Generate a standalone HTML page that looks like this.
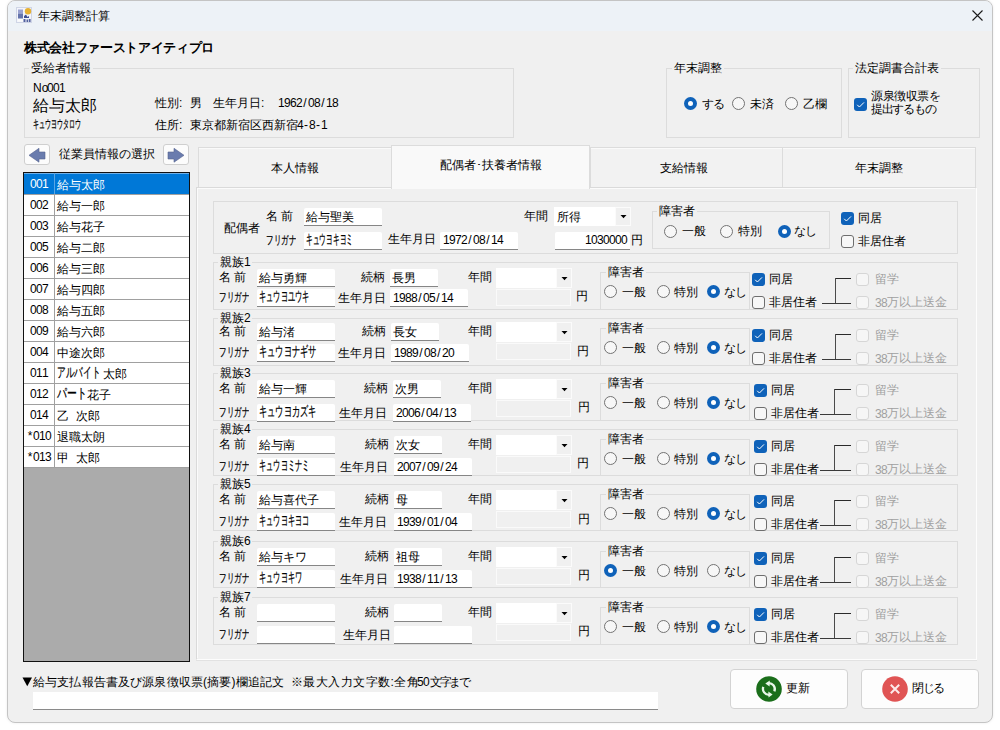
<!DOCTYPE html><html><head><meta charset="utf-8"><style>
html,body{margin:0;padding:0;width:1000px;height:730px;overflow:hidden;background:#fff;}
body{position:relative;font-family:"Liberation Sans",sans-serif;}
.t{position:absolute;white-space:nowrap;line-height:14px;font-size:12px;}
.m i{font-style:normal;display:inline-block;width:6px;text-align:center;}
.h{transform-origin:0 0;-webkit-text-stroke:0.25px currentColor;}
.b{position:absolute;box-sizing:content-box;}
</style></head><body>

<div class="b" style="left:7px;top:0px;width:984px;height:721px;border:1px solid #c4c4c4;border-radius:8px;background:#f0f0f0;box-shadow:0 0 3px rgba(0,0,0,0.08);overflow:hidden">
<div class="b" style="left:0;top:0;width:984px;height:30px;background:#edf2f7;"></div>
</div>
<svg class="b" style="left:16px;top:7px" width="16" height="16">
<rect x="0.5" y="0.5" width="15" height="15" fill="#f3f5fb" stroke="#cfd5e6"/>
<rect x="2" y="2.5" width="5" height="4" fill="#9aa2d0"/>
<rect x="2" y="6.5" width="5" height="5" fill="#6474ac"/>
<rect x="2" y="12" width="5" height="2.5" fill="#fafafa"/>
<circle cx="12" cy="4.3" r="3.2" fill="#e5b032"/>
<path d="M8 9 L10 7.5 L11.5 10 L13 9 L13 11 L8 11 Z" fill="#3e4f93"/>
<path d="M7.5 12 h2 v3 h-2 Z M10.5 12.5 h1.6 v2.5 h-1.6 Z M12.8 12 h1.8 v3 h-1.8 Z" fill="#52619e"/>
</svg>
<div class="t" style="left:38px;top:9px;font-size:12px;color:#000;">年末調整計算</div>
<svg class="b" style="left:971px;top:9px" width="13" height="13"><path d="M1.5 1.5 L11.5 11.5 M11.5 1.5 L1.5 11.5" stroke="#1a1a1a" stroke-width="1.1"/></svg>
<div class="t" style="left:24px;top:41px;font-size:13px;color:#000;font-weight:bold;letter-spacing:-0.33px">株式会社ファーストアイティプロ</div>
<div class="b" style="left:24px;top:68px;width:488px;height:68px;border:1px solid #dcdcdc;"></div>
<div class="t" style="left:31px;top:61px;font-size:12px;color:#000;background:#f0f0f0;padding:0 2px 0 2px;margin-left:-2px;">受給者情報</div>
<div class="t" style="left:33px;top:81px;font-size:12px;color:#000;">No</div>
<div class="t m" style="left:47px;top:81px;color:#000;"><i>0</i><i>0</i><i>1</i></div>
<div class="t" style="left:33px;top:96px;font-size:16px;color:#000;line-height:20px">給与太郎</div>
<div class="t h" style="left:33px;top:117px;font-size:12px;color:#000;transform:scaleX(0.5000);">キュウヨウタロウ</div>
<div class="t" style="left:155px;top:96px;font-size:12px;color:#000;">性別:</div>
<div class="t" style="left:190px;top:96px;font-size:12px;color:#000;">男</div>
<div class="t" style="left:213px;top:96px;font-size:12px;color:#000;">生年月日:</div>
<div class="t m" style="left:278px;top:96px;color:#000;"><i>1</i><i>9</i><i>6</i><i>2</i><i>/</i><i>0</i><i>8</i><i>/</i><i>1</i><i>8</i></div>
<div class="t" style="left:155px;top:118px;font-size:12px;color:#000;">住所:</div>
<div class="t" style="left:190px;top:118px;font-size:12px;color:#000;">東京都新宿区西新宿</div>
<div class="t m" style="left:297px;top:118px;color:#000;"><i>4</i><i>-</i><i>8</i><i>-</i><i>1</i></div>
<div class="b" style="left:666px;top:68px;width:174px;height:68px;border:1px solid #dcdcdc;"></div>
<div class="t" style="left:674px;top:61px;font-size:12px;color:#000;background:#f0f0f0;padding:0 2px 0 2px;margin-left:-2px;">年末調整</div>
<div class="b" style="left:684px;top:97px;width:13px;height:13px;border-radius:50%;background:#0f62b9;"></div>
<div class="b" style="left:688px;top:101px;width:5px;height:5px;border-radius:50%;background:#fff;"></div>
<div class="t" style="left:702px;top:97px;font-size:12px;color:#000;letter-spacing:-1.5px">する</div>
<div class="b" style="left:732px;top:97px;width:11px;height:11px;border-radius:50%;border:1px solid #737373;background:#f7f7f7;"></div>
<div class="t" style="left:750px;top:97px;font-size:12px;color:#000;">未済</div>
<div class="b" style="left:785px;top:97px;width:11px;height:11px;border-radius:50%;border:1px solid #737373;background:#f7f7f7;"></div>
<div class="t" style="left:803px;top:97px;font-size:12px;color:#000;">乙欄</div>
<div class="b" style="left:848px;top:68px;width:130px;height:68px;border:1px solid #dcdcdc;"></div>
<div class="t" style="left:855px;top:61px;font-size:12px;color:#000;background:#f0f0f0;padding:0 2px 0 2px;margin-left:-2px;">法定調書合計表</div>
<div class="b" style="left:854px;top:98px;width:13px;height:13px;border-radius:3px;background:#0f62b9;"></div>
<svg class="b" style="left:854px;top:98px" width="13" height="13"><path d="M3.2 6.8 L5.4 9 L10 4.4" stroke="#fff" stroke-width="1" fill="none"/></svg>
<div class="t" style="left:871px;top:90px;font-size:12px;color:#000;line-height:13px;letter-spacing:-0.4px">源泉徴収票を</div>
<div class="t" style="left:871px;top:103px;font-size:12px;color:#000;line-height:13px;letter-spacing:-1.3px">提出するもの</div>
<div class="b" style="left:24px;top:144px;width:24px;height:19px;background:#fcfcfc;border:1px solid #cfcfcf;border-radius:3px;"></div>
<svg class="b" style="left:24px;top:144px" width="26" height="21"><path d="M5 11.3 L15 4.3 L15 8 L21 8 L21 15 L15 15 L15 18.2 Z" fill="#6a7cae" stroke="#56638f" stroke-width="0.6"/></svg>
<div class="b" style="left:163px;top:144px;width:24px;height:19px;background:#fcfcfc;border:1px solid #cfcfcf;border-radius:3px;"></div>
<svg class="b" style="left:163px;top:144px" width="26" height="21"><path d="M21 11.3 L11 4.3 L11 8 L5 8 L5 15 L11 15 L11 18.2 Z" fill="#6a7cae" stroke="#56638f" stroke-width="0.6"/></svg>
<div class="t" style="left:59px;top:147px;font-size:12px;color:#000;">従業員情報の選択</div>
<div class="b" style="left:23px;top:172px;width:165px;height:488px;border:1px solid #111;background:#ababab;"></div>
<div class="b" style="left:24px;top:174px;width:165px;height:20px;background:#0078d7;border-bottom:1px solid #a0a0a0;"></div>
<div class="b" style="left:24px;top:173px;width:165px;height:1px;background:#6fb0e8"></div>
<div class="b" style="left:54px;top:173px;width:1px;height:21px;background:#5aa6e4;"></div>
<div class="t m" style="left:30px;top:177px;color:#fff;"><i>0</i><i>0</i><i>1</i></div>
<div class="t" style="left:57px;top:178px;font-size:12px;color:#fff;">給与太郎</div>
<div class="b" style="left:24px;top:195px;width:165px;height:20px;background:#fff;border-bottom:1px solid #a0a0a0;"></div>
<div class="b" style="left:54px;top:195px;width:1px;height:21px;background:#a0a0a0;"></div>
<div class="t m" style="left:30px;top:198px;color:#000;"><i>0</i><i>0</i><i>2</i></div>
<div class="t" style="left:57px;top:199px;font-size:12px;color:#000;">給与一郎</div>
<div class="b" style="left:24px;top:216px;width:165px;height:20px;background:#fff;border-bottom:1px solid #a0a0a0;"></div>
<div class="b" style="left:54px;top:216px;width:1px;height:21px;background:#a0a0a0;"></div>
<div class="t m" style="left:30px;top:219px;color:#000;"><i>0</i><i>0</i><i>3</i></div>
<div class="t" style="left:57px;top:220px;font-size:12px;color:#000;">給与花子</div>
<div class="b" style="left:24px;top:237px;width:165px;height:20px;background:#fff;border-bottom:1px solid #a0a0a0;"></div>
<div class="b" style="left:54px;top:237px;width:1px;height:21px;background:#a0a0a0;"></div>
<div class="t m" style="left:30px;top:240px;color:#000;"><i>0</i><i>0</i><i>5</i></div>
<div class="t" style="left:57px;top:241px;font-size:12px;color:#000;">給与二郎</div>
<div class="b" style="left:24px;top:258px;width:165px;height:20px;background:#fff;border-bottom:1px solid #a0a0a0;"></div>
<div class="b" style="left:54px;top:258px;width:1px;height:21px;background:#a0a0a0;"></div>
<div class="t m" style="left:30px;top:261px;color:#000;"><i>0</i><i>0</i><i>6</i></div>
<div class="t" style="left:57px;top:262px;font-size:12px;color:#000;">給与三郎</div>
<div class="b" style="left:24px;top:279px;width:165px;height:20px;background:#fff;border-bottom:1px solid #a0a0a0;"></div>
<div class="b" style="left:54px;top:279px;width:1px;height:21px;background:#a0a0a0;"></div>
<div class="t m" style="left:30px;top:282px;color:#000;"><i>0</i><i>0</i><i>7</i></div>
<div class="t" style="left:57px;top:283px;font-size:12px;color:#000;">給与四郎</div>
<div class="b" style="left:24px;top:300px;width:165px;height:20px;background:#fff;border-bottom:1px solid #a0a0a0;"></div>
<div class="b" style="left:54px;top:300px;width:1px;height:21px;background:#a0a0a0;"></div>
<div class="t m" style="left:30px;top:303px;color:#000;"><i>0</i><i>0</i><i>8</i></div>
<div class="t" style="left:57px;top:304px;font-size:12px;color:#000;">給与五郎</div>
<div class="b" style="left:24px;top:321px;width:165px;height:20px;background:#fff;border-bottom:1px solid #a0a0a0;"></div>
<div class="b" style="left:54px;top:321px;width:1px;height:21px;background:#a0a0a0;"></div>
<div class="t m" style="left:30px;top:324px;color:#000;"><i>0</i><i>0</i><i>9</i></div>
<div class="t" style="left:57px;top:325px;font-size:12px;color:#000;">給与六郎</div>
<div class="b" style="left:24px;top:342px;width:165px;height:20px;background:#fff;border-bottom:1px solid #a0a0a0;"></div>
<div class="b" style="left:54px;top:342px;width:1px;height:21px;background:#a0a0a0;"></div>
<div class="t m" style="left:30px;top:345px;color:#000;"><i>0</i><i>0</i><i>4</i></div>
<div class="t" style="left:57px;top:346px;font-size:12px;color:#000;">中途次郎</div>
<div class="b" style="left:24px;top:363px;width:165px;height:20px;background:#fff;border-bottom:1px solid #a0a0a0;"></div>
<div class="b" style="left:54px;top:363px;width:1px;height:21px;background:#a0a0a0;"></div>
<div class="t m" style="left:30px;top:366px;color:#000;"><i>0</i><i>1</i><i>1</i></div>
<div class="t h" style="left:57px;top:365px;font-size:14px;color:#000;transform:scaleX(0.6171);">アルバイト</div>
<div class="t" style="left:103px;top:367px;font-size:12px;color:#000;">太郎</div>
<div class="b" style="left:24px;top:384px;width:165px;height:20px;background:#fff;border-bottom:1px solid #a0a0a0;"></div>
<div class="b" style="left:54px;top:384px;width:1px;height:21px;background:#a0a0a0;"></div>
<div class="t m" style="left:30px;top:387px;color:#000;"><i>0</i><i>1</i><i>2</i></div>
<div class="t h" style="left:57px;top:386px;font-size:14px;color:#000;transform:scaleX(0.7048);">パート</div>
<div class="t" style="left:87px;top:388px;font-size:12px;color:#000;">花子</div>
<div class="b" style="left:24px;top:405px;width:165px;height:20px;background:#fff;border-bottom:1px solid #a0a0a0;"></div>
<div class="b" style="left:54px;top:405px;width:1px;height:21px;background:#a0a0a0;"></div>
<div class="t m" style="left:30px;top:408px;color:#000;"><i>0</i><i>1</i><i>4</i></div>
<div class="t" style="left:57px;top:409px;font-size:12px;color:#000;">乙</div>
<div class="t" style="left:76px;top:409px;font-size:12px;color:#000;">次郎</div>
<div class="b" style="left:24px;top:426px;width:165px;height:20px;background:#fff;border-bottom:1px solid #a0a0a0;"></div>
<div class="b" style="left:54px;top:426px;width:1px;height:21px;background:#a0a0a0;"></div>
<div class="t m" style="left:27px;top:429px;color:#000;"><i>*</i><i>0</i><i>1</i><i>0</i></div>
<div class="t" style="left:57px;top:430px;font-size:12px;color:#000;">退職太朗</div>
<div class="b" style="left:24px;top:447px;width:165px;height:20px;background:#fff;border-bottom:1px solid #a0a0a0;"></div>
<div class="b" style="left:54px;top:447px;width:1px;height:21px;background:#a0a0a0;"></div>
<div class="t m" style="left:27px;top:450px;color:#000;"><i>*</i><i>0</i><i>1</i><i>3</i></div>
<div class="t" style="left:57px;top:451px;font-size:12px;color:#000;">甲</div>
<div class="t" style="left:76px;top:451px;font-size:12px;color:#000;">太郎</div>
<div class="b" style="left:196px;top:187px;width:779px;height:471px;background:#f0f0f0;border:1px solid #dadada;border-right-color:#fdfdfd;border-bottom-color:#fdfdfd;"></div>
<div class="b" style="left:196px;top:660px;width:781px;height:1px;background:#e2e2e2"></div>
<div class="b" style="left:197px;top:188px;width:778px;height:1px;background:#fbfbfb"></div>
<div class="b" style="left:197px;top:188px;width:1px;height:470px;background:#fbfbfb"></div>
<div class="b" style="left:198px;top:147px;width:192px;height:39px;background:#f2f2f2;border:1px solid #dcdcdc;border-bottom:none;"></div>
<div class="b" style="left:199px;top:148px;width:192px;height:1px;background:#fafafa"></div>
<div class="t" style="left:198px;top:148px;width:193px;text-align:center;line-height:40px">本人情報</div>
<div class="b" style="left:590px;top:147px;width:191px;height:39px;background:#f2f2f2;border:1px solid #dcdcdc;border-bottom:none;"></div>
<div class="b" style="left:591px;top:148px;width:191px;height:1px;background:#fafafa"></div>
<div class="t" style="left:588px;top:148px;width:192px;text-align:center;line-height:40px">支給情報</div>
<div class="b" style="left:782px;top:147px;width:192px;height:39px;background:#f2f2f2;border:1px solid #dcdcdc;border-bottom:none;"></div>
<div class="b" style="left:783px;top:148px;width:192px;height:1px;background:#fafafa"></div>
<div class="t" style="left:782px;top:148px;width:193px;text-align:center;line-height:40px">年末調整</div>
<div class="b" style="left:391px;top:145px;width:197px;height:43px;background:#f9f9f9;border:1px solid #dcdcdc;border-bottom:none;"></div>
<div class="t" style="left:391px;top:145px;width:200px;text-align:center;line-height:40px">配偶者･扶養者情報</div>
<div class="b" style="left:213px;top:201px;width:743px;height:51px;border:1px solid #dcdcdc;"></div>
<div class="t" style="left:224px;top:221px;font-size:12px;color:#000;">配偶者</div>
<div class="t" style="left:266px;top:209px;font-size:12px;color:#000;">名&nbsp;前</div>
<div class="t h" style="left:266px;top:233px;font-size:12px;color:#000;transform:scaleX(0.6250);">フリガナ</div>
<div class="b" style="left:304px;top:208px;width:78px;height:17px;background:#fff;border-bottom:1px solid #868686;border-radius:2px 2px 0 0;"></div>
<div class="t" style="left:306px;top:210px;font-size:12px;color:#000;">給与聖美</div>
<div class="b" style="left:304px;top:232px;width:78px;height:17px;background:#fff;border-bottom:1px solid #868686;border-radius:2px 2px 0 0;"></div>
<div class="t h" style="left:306px;top:232px;font-size:14px;color:#000;transform:scaleX(0.4786);">キュウヨキヨミ</div>
<div class="t" style="left:388px;top:232px;font-size:12px;color:#000;">生年月日</div>
<div class="b" style="left:440px;top:232px;width:78px;height:17px;background:#fff;border-bottom:1px solid #868686;border-radius:2px 2px 0 0;"></div>
<div class="t m" style="left:443px;top:233px;color:#000;"><i>1</i><i>9</i><i>7</i><i>2</i><i>/</i><i>0</i><i>8</i><i>/</i><i>1</i><i>4</i></div>
<div class="t" style="left:524px;top:209px;font-size:12px;color:#000;">年間</div>
<div class="b" style="left:554px;top:207px;width:77px;height:19px;background:#fff;"></div>
<div class="b" style="left:615px;top:207px;width:16px;height:19px;background:#f0f0f0;border:1px solid #fbfbfb;box-sizing:border-box"></div>
<svg class="b" style="left:620px;top:215px" width="7" height="4"><path d="M0.5 0 L6.5 0 L3.5 3.2 Z" fill="#000"/></svg>
<div class="t" style="left:557px;top:210px;font-size:12px;color:#000;">所得</div>
<div class="b" style="left:555px;top:232px;width:75px;height:17px;background:#fff;border-bottom:1px solid #868686;border-radius:2px 2px 0 0;"></div>
<div class="t m" style="left:585px;top:233px;color:#000;"><i>1</i><i>0</i><i>3</i><i>0</i><i>0</i><i>0</i><i>0</i></div>
<div class="t" style="left:631px;top:233px;font-size:12px;color:#000;">円</div>
<div class="b" style="left:652px;top:211px;width:176px;height:36px;border:1px solid #dcdcdc;"></div>
<div class="t" style="left:659px;top:204px;font-size:12px;color:#000;background:#f0f0f0;padding:0 2px 0 2px;margin-left:-2px;">障害者</div>
<div class="b" style="left:664px;top:225px;width:11px;height:11px;border-radius:50%;border:1px solid #737373;background:#f7f7f7;"></div>
<div class="t" style="left:682px;top:224px;font-size:12px;color:#000;">一般</div>
<div class="b" style="left:720px;top:225px;width:11px;height:11px;border-radius:50%;border:1px solid #737373;background:#f7f7f7;"></div>
<div class="t" style="left:738px;top:224px;font-size:12px;color:#000;">特別</div>
<div class="b" style="left:778px;top:225px;width:13px;height:13px;border-radius:50%;background:#0f62b9;"></div>
<div class="b" style="left:782px;top:229px;width:5px;height:5px;border-radius:50%;background:#fff;"></div>
<div class="t" style="left:794px;top:224px;font-size:12px;color:#000;letter-spacing:-1.5px">なし</div>
<div class="b" style="left:841px;top:212px;width:13px;height:13px;border-radius:3px;background:#0f62b9;"></div>
<svg class="b" style="left:841px;top:212px" width="13" height="13"><path d="M3.2 6.8 L5.4 9 L10 4.4" stroke="#fff" stroke-width="1" fill="none"/></svg>
<div class="t" style="left:858px;top:211px;font-size:12px;color:#000;">同居</div>
<div class="b" style="left:841px;top:235px;width:11px;height:11px;border-radius:3px;border:1px solid #6e6e6e;background:#f7f7f7;"></div>
<div class="t" style="left:858px;top:234px;font-size:12px;color:#000;">非居住者</div>
<div class="b" style="left:213px;top:262px;width:743px;height:46px;border:1px solid #dcdcdc;"></div>
<div class="t" style="left:220px;top:255px;font-size:12px;color:#000;background:#f0f0f0;padding:0 2px 0 2px;margin-left:-2px;">親族</div>
<div class="t m" style="left:244px;top:255px;color:#000;background:#f0f0f0;padding-right:2px"><i>1</i></div>
<div class="t" style="left:219px;top:270px;font-size:12px;color:#000;">名&nbsp;前</div>
<div class="t h" style="left:219px;top:290px;font-size:12px;color:#000;transform:scaleX(0.6250);">フリガナ</div>
<div class="b" style="left:257px;top:269px;width:78px;height:17px;background:#fff;border-bottom:1px solid #868686;border-radius:2px 2px 0 0;"></div>
<div class="t" style="left:259px;top:271px;font-size:12px;color:#000;">給与勇輝</div>
<div class="b" style="left:257px;top:289px;width:78px;height:17px;background:#fff;border-bottom:1px solid #868686;border-radius:2px 2px 0 0;"></div>
<div class="t h" style="left:259px;top:289px;font-size:14px;color:#000;transform:scaleX(0.5143);">キュウヨユウキ</div>
<div class="t" style="left:361px;top:270px;font-size:12px;color:#000;">続柄</div>
<div class="b" style="left:390px;top:269px;width:48px;height:17px;background:#fff;border-bottom:1px solid #868686;border-radius:2px 2px 0 0;"></div>
<div class="t" style="left:392px;top:271px;font-size:12px;color:#000;">長男</div>
<div class="t" style="left:338px;top:291px;font-size:12px;color:#000;">生年月日</div>
<div class="b" style="left:390px;top:289px;width:78px;height:17px;background:#fff;border-bottom:1px solid #868686;border-radius:2px 2px 0 0;"></div>
<div class="t m" style="left:393px;top:291px;color:#000;"><i>1</i><i>9</i><i>8</i><i>8</i><i>/</i><i>0</i><i>5</i><i>/</i><i>1</i><i>4</i></div>
<div class="t" style="left:468px;top:270px;font-size:12px;color:#000;">年間</div>
<div class="b" style="left:496px;top:268px;width:76px;height:20px;background:#fff;"></div>
<div class="b" style="left:556px;top:268px;width:16px;height:20px;background:#f0f0f0;border:1px solid #fbfbfb;box-sizing:border-box"></div>
<svg class="b" style="left:561px;top:277px" width="7" height="4"><path d="M0.5 0 L6.5 0 L3.5 3.2 Z" fill="#000"/></svg>
<div class="b" style="left:496px;top:289px;width:73px;height:15px;background:#f0f0f0;border:1px solid #fafafa;"></div>
<div class="t" style="left:576px;top:289px;font-size:12px;color:#000;">円</div>
<div class="b" style="left:600px;top:272px;width:148px;height:36px;border:1px solid #dcdcdc;"></div>
<div class="t" style="left:608px;top:265px;font-size:12px;color:#000;background:#f0f0f0;padding:0 2px 0 2px;margin-left:-2px;">障害者</div>
<div class="b" style="left:604px;top:285px;width:11px;height:11px;border-radius:50%;border:1px solid #737373;background:#f7f7f7;"></div>
<div class="t" style="left:622px;top:285px;font-size:12px;color:#000;">一般</div>
<div class="b" style="left:657px;top:285px;width:11px;height:11px;border-radius:50%;border:1px solid #737373;background:#f7f7f7;"></div>
<div class="t" style="left:674px;top:285px;font-size:12px;color:#000;">特別</div>
<div class="b" style="left:707px;top:285px;width:13px;height:13px;border-radius:50%;background:#0f62b9;"></div>
<div class="b" style="left:711px;top:289px;width:5px;height:5px;border-radius:50%;background:#fff;"></div>
<div class="t" style="left:724px;top:285px;font-size:12px;color:#000;letter-spacing:-1.5px">なし</div>
<div class="b" style="left:752px;top:273px;width:13px;height:13px;border-radius:3px;background:#0f62b9;"></div>
<svg class="b" style="left:752px;top:273px" width="13" height="13"><path d="M3.2 6.8 L5.4 9 L10 4.4" stroke="#fff" stroke-width="1" fill="none"/></svg>
<div class="t" style="left:769px;top:272px;font-size:12px;color:#000;">同居</div>
<div class="b" style="left:752px;top:296px;width:11px;height:11px;border-radius:3px;border:1px solid #6e6e6e;background:#f7f7f7;"></div>
<div class="t" style="left:769px;top:295px;font-size:12px;color:#000;">非居住者</div>
<div class="b" style="left:835px;top:278px;width:16px;height:1px;background:#2a2a2a"></div>
<div class="b" style="left:835px;top:278px;width:1px;height:25px;background:#4a4a4a"></div>
<div class="b" style="left:822px;top:303px;width:29px;height:1px;background:#3a3a3a"></div>
<div class="b" style="left:856px;top:273px;width:11px;height:11px;border-radius:3px;border:1px solid #d6d6d6;background:#f6f6f6;"></div>
<div class="t" style="left:875px;top:272px;font-size:12px;color:#a0a0a0;">留学</div>
<div class="b" style="left:856px;top:296px;width:11px;height:11px;border-radius:3px;border:1px solid #d6d6d6;background:#f6f6f6;"></div>
<div class="t m" style="left:875px;top:296px;color:#a0a0a0;"><i>3</i><i>8</i></div>
<div class="t" style="left:887px;top:295px;font-size:12px;color:#a0a0a0;">万以上送金</div>
<div class="b" style="left:213px;top:318px;width:743px;height:46px;border:1px solid #dcdcdc;"></div>
<div class="t" style="left:220px;top:311px;font-size:12px;color:#000;background:#f0f0f0;padding:0 2px 0 2px;margin-left:-2px;">親族</div>
<div class="t m" style="left:244px;top:311px;color:#000;background:#f0f0f0;padding-right:2px"><i>2</i></div>
<div class="t" style="left:219px;top:324px;font-size:12px;color:#000;">名&nbsp;前</div>
<div class="t h" style="left:219px;top:345px;font-size:12px;color:#000;transform:scaleX(0.6250);">フリガナ</div>
<div class="b" style="left:257px;top:323px;width:78px;height:17px;background:#fff;border-bottom:1px solid #868686;border-radius:2px 2px 0 0;"></div>
<div class="t" style="left:259px;top:325px;font-size:12px;color:#000;">給与渚</div>
<div class="b" style="left:257px;top:344px;width:78px;height:17px;background:#fff;border-bottom:1px solid #868686;border-radius:2px 2px 0 0;"></div>
<div class="t h" style="left:259px;top:344px;font-size:14px;color:#000;transform:scaleX(0.5878);">キュウヨナギサ</div>
<div class="t" style="left:362px;top:324px;font-size:12px;color:#000;">続柄</div>
<div class="b" style="left:391px;top:323px;width:48px;height:17px;background:#fff;border-bottom:1px solid #868686;border-radius:2px 2px 0 0;"></div>
<div class="t" style="left:393px;top:325px;font-size:12px;color:#000;">長女</div>
<div class="t" style="left:338px;top:346px;font-size:12px;color:#000;">生年月日</div>
<div class="b" style="left:391px;top:344px;width:78px;height:17px;background:#fff;border-bottom:1px solid #868686;border-radius:2px 2px 0 0;"></div>
<div class="t m" style="left:394px;top:346px;color:#000;"><i>1</i><i>9</i><i>8</i><i>9</i><i>/</i><i>0</i><i>8</i><i>/</i><i>2</i><i>0</i></div>
<div class="t" style="left:468px;top:324px;font-size:12px;color:#000;">年間</div>
<div class="b" style="left:496px;top:322px;width:76px;height:20px;background:#fff;"></div>
<div class="b" style="left:556px;top:322px;width:16px;height:20px;background:#f0f0f0;border:1px solid #fbfbfb;box-sizing:border-box"></div>
<svg class="b" style="left:561px;top:331px" width="7" height="4"><path d="M0.5 0 L6.5 0 L3.5 3.2 Z" fill="#000"/></svg>
<div class="b" style="left:496px;top:343px;width:73px;height:15px;background:#f0f0f0;border:1px solid #fafafa;"></div>
<div class="t" style="left:577px;top:344px;font-size:12px;color:#000;">円</div>
<div class="b" style="left:600px;top:328px;width:148px;height:36px;border:1px solid #dcdcdc;"></div>
<div class="t" style="left:608px;top:321px;font-size:12px;color:#000;background:#f0f0f0;padding:0 2px 0 2px;margin-left:-2px;">障害者</div>
<div class="b" style="left:604px;top:341px;width:11px;height:11px;border-radius:50%;border:1px solid #737373;background:#f7f7f7;"></div>
<div class="t" style="left:622px;top:341px;font-size:12px;color:#000;">一般</div>
<div class="b" style="left:657px;top:341px;width:11px;height:11px;border-radius:50%;border:1px solid #737373;background:#f7f7f7;"></div>
<div class="t" style="left:674px;top:341px;font-size:12px;color:#000;">特別</div>
<div class="b" style="left:707px;top:341px;width:13px;height:13px;border-radius:50%;background:#0f62b9;"></div>
<div class="b" style="left:711px;top:345px;width:5px;height:5px;border-radius:50%;background:#fff;"></div>
<div class="t" style="left:724px;top:341px;font-size:12px;color:#000;letter-spacing:-1.5px">なし</div>
<div class="b" style="left:752px;top:329px;width:13px;height:13px;border-radius:3px;background:#0f62b9;"></div>
<svg class="b" style="left:752px;top:329px" width="13" height="13"><path d="M3.2 6.8 L5.4 9 L10 4.4" stroke="#fff" stroke-width="1" fill="none"/></svg>
<div class="t" style="left:769px;top:328px;font-size:12px;color:#000;">同居</div>
<div class="b" style="left:752px;top:352px;width:11px;height:11px;border-radius:3px;border:1px solid #6e6e6e;background:#f7f7f7;"></div>
<div class="t" style="left:769px;top:351px;font-size:12px;color:#000;">非居住者</div>
<div class="b" style="left:835px;top:334px;width:16px;height:1px;background:#2a2a2a"></div>
<div class="b" style="left:835px;top:334px;width:1px;height:25px;background:#4a4a4a"></div>
<div class="b" style="left:822px;top:359px;width:29px;height:1px;background:#3a3a3a"></div>
<div class="b" style="left:856px;top:329px;width:11px;height:11px;border-radius:3px;border:1px solid #d6d6d6;background:#f6f6f6;"></div>
<div class="t" style="left:875px;top:328px;font-size:12px;color:#a0a0a0;">留学</div>
<div class="b" style="left:856px;top:352px;width:11px;height:11px;border-radius:3px;border:1px solid #d6d6d6;background:#f6f6f6;"></div>
<div class="t m" style="left:875px;top:352px;color:#a0a0a0;"><i>3</i><i>8</i></div>
<div class="t" style="left:887px;top:351px;font-size:12px;color:#a0a0a0;">万以上送金</div>
<div class="b" style="left:213px;top:373px;width:743px;height:46px;border:1px solid #dcdcdc;"></div>
<div class="t" style="left:220px;top:366px;font-size:12px;color:#000;background:#f0f0f0;padding:0 2px 0 2px;margin-left:-2px;">親族</div>
<div class="t m" style="left:244px;top:366px;color:#000;background:#f0f0f0;padding-right:2px"><i>3</i></div>
<div class="t" style="left:219px;top:381px;font-size:12px;color:#000;">名&nbsp;前</div>
<div class="t h" style="left:219px;top:405px;font-size:12px;color:#000;transform:scaleX(0.6250);">フリガナ</div>
<div class="b" style="left:257px;top:380px;width:78px;height:17px;background:#fff;border-bottom:1px solid #868686;border-radius:2px 2px 0 0;"></div>
<div class="t" style="left:259px;top:382px;font-size:12px;color:#000;">給与一輝</div>
<div class="b" style="left:257px;top:404px;width:78px;height:17px;background:#fff;border-bottom:1px solid #868686;border-radius:2px 2px 0 0;"></div>
<div class="t h" style="left:259px;top:404px;font-size:14px;color:#000;transform:scaleX(0.5878);">キュウヨカズキ</div>
<div class="t" style="left:364px;top:381px;font-size:12px;color:#000;">続柄</div>
<div class="b" style="left:393px;top:380px;width:48px;height:17px;background:#fff;border-bottom:1px solid #868686;border-radius:2px 2px 0 0;"></div>
<div class="t" style="left:395px;top:382px;font-size:12px;color:#000;">次男</div>
<div class="t" style="left:339px;top:406px;font-size:12px;color:#000;">生年月日</div>
<div class="b" style="left:393px;top:404px;width:78px;height:17px;background:#fff;border-bottom:1px solid #868686;border-radius:2px 2px 0 0;"></div>
<div class="t m" style="left:396px;top:406px;color:#000;"><i>2</i><i>0</i><i>0</i><i>6</i><i>/</i><i>0</i><i>4</i><i>/</i><i>1</i><i>3</i></div>
<div class="t" style="left:468px;top:381px;font-size:12px;color:#000;">年間</div>
<div class="b" style="left:496px;top:379px;width:76px;height:20px;background:#fff;"></div>
<div class="b" style="left:556px;top:379px;width:16px;height:20px;background:#f0f0f0;border:1px solid #fbfbfb;box-sizing:border-box"></div>
<svg class="b" style="left:561px;top:388px" width="7" height="4"><path d="M0.5 0 L6.5 0 L3.5 3.2 Z" fill="#000"/></svg>
<div class="b" style="left:496px;top:400px;width:73px;height:15px;background:#f0f0f0;border:1px solid #fafafa;"></div>
<div class="t" style="left:578px;top:400px;font-size:12px;color:#000;">円</div>
<div class="b" style="left:600px;top:383px;width:148px;height:36px;border:1px solid #dcdcdc;"></div>
<div class="t" style="left:608px;top:376px;font-size:12px;color:#000;background:#f0f0f0;padding:0 2px 0 2px;margin-left:-2px;">障害者</div>
<div class="b" style="left:604px;top:396px;width:11px;height:11px;border-radius:50%;border:1px solid #737373;background:#f7f7f7;"></div>
<div class="t" style="left:622px;top:396px;font-size:12px;color:#000;">一般</div>
<div class="b" style="left:657px;top:396px;width:11px;height:11px;border-radius:50%;border:1px solid #737373;background:#f7f7f7;"></div>
<div class="t" style="left:674px;top:396px;font-size:12px;color:#000;">特別</div>
<div class="b" style="left:707px;top:396px;width:13px;height:13px;border-radius:50%;background:#0f62b9;"></div>
<div class="b" style="left:711px;top:400px;width:5px;height:5px;border-radius:50%;background:#fff;"></div>
<div class="t" style="left:724px;top:396px;font-size:12px;color:#000;letter-spacing:-1.5px">なし</div>
<div class="b" style="left:754px;top:384px;width:13px;height:13px;border-radius:3px;background:#0f62b9;"></div>
<svg class="b" style="left:754px;top:384px" width="13" height="13"><path d="M3.2 6.8 L5.4 9 L10 4.4" stroke="#fff" stroke-width="1" fill="none"/></svg>
<div class="t" style="left:771px;top:383px;font-size:12px;color:#000;">同居</div>
<div class="b" style="left:754px;top:407px;width:11px;height:11px;border-radius:3px;border:1px solid #6e6e6e;background:#f7f7f7;"></div>
<div class="t" style="left:771px;top:406px;font-size:12px;color:#000;">非居住者</div>
<div class="b" style="left:834px;top:389px;width:17px;height:1px;background:#2a2a2a"></div>
<div class="b" style="left:834px;top:389px;width:1px;height:25px;background:#4a4a4a"></div>
<div class="b" style="left:820px;top:414px;width:31px;height:1px;background:#3a3a3a"></div>
<div class="b" style="left:856px;top:384px;width:11px;height:11px;border-radius:3px;border:1px solid #d6d6d6;background:#f6f6f6;"></div>
<div class="t" style="left:875px;top:383px;font-size:12px;color:#a0a0a0;">留学</div>
<div class="b" style="left:856px;top:407px;width:11px;height:11px;border-radius:3px;border:1px solid #d6d6d6;background:#f6f6f6;"></div>
<div class="t m" style="left:875px;top:407px;color:#a0a0a0;"><i>3</i><i>8</i></div>
<div class="t" style="left:887px;top:406px;font-size:12px;color:#a0a0a0;">万以上送金</div>
<div class="b" style="left:213px;top:429px;width:743px;height:45px;border:1px solid #dcdcdc;"></div>
<div class="t" style="left:220px;top:422px;font-size:12px;color:#000;background:#f0f0f0;padding:0 2px 0 2px;margin-left:-2px;">親族</div>
<div class="t m" style="left:244px;top:422px;color:#000;background:#f0f0f0;padding-right:2px"><i>4</i></div>
<div class="t" style="left:219px;top:437px;font-size:12px;color:#000;">名&nbsp;前</div>
<div class="t h" style="left:219px;top:459px;font-size:12px;color:#000;transform:scaleX(0.6250);">フリガナ</div>
<div class="b" style="left:257px;top:436px;width:78px;height:17px;background:#fff;border-bottom:1px solid #868686;border-radius:2px 2px 0 0;"></div>
<div class="t" style="left:259px;top:438px;font-size:12px;color:#000;">給与南</div>
<div class="b" style="left:257px;top:458px;width:78px;height:17px;background:#fff;border-bottom:1px solid #868686;border-radius:2px 2px 0 0;"></div>
<div class="t h" style="left:259px;top:458px;font-size:14px;color:#000;transform:scaleX(0.5143);">キュウヨミナミ</div>
<div class="t" style="left:365px;top:437px;font-size:12px;color:#000;">続柄</div>
<div class="b" style="left:394px;top:436px;width:48px;height:17px;background:#fff;border-bottom:1px solid #868686;border-radius:2px 2px 0 0;"></div>
<div class="t" style="left:396px;top:438px;font-size:12px;color:#000;">次女</div>
<div class="t" style="left:340px;top:460px;font-size:12px;color:#000;">生年月日</div>
<div class="b" style="left:394px;top:458px;width:78px;height:17px;background:#fff;border-bottom:1px solid #868686;border-radius:2px 2px 0 0;"></div>
<div class="t m" style="left:397px;top:460px;color:#000;"><i>2</i><i>0</i><i>0</i><i>7</i><i>/</i><i>0</i><i>9</i><i>/</i><i>2</i><i>4</i></div>
<div class="t" style="left:468px;top:437px;font-size:12px;color:#000;">年間</div>
<div class="b" style="left:496px;top:435px;width:76px;height:20px;background:#fff;"></div>
<div class="b" style="left:556px;top:435px;width:16px;height:20px;background:#f0f0f0;border:1px solid #fbfbfb;box-sizing:border-box"></div>
<svg class="b" style="left:561px;top:444px" width="7" height="4"><path d="M0.5 0 L6.5 0 L3.5 3.2 Z" fill="#000"/></svg>
<div class="b" style="left:496px;top:456px;width:73px;height:15px;background:#f0f0f0;border:1px solid #fafafa;"></div>
<div class="t" style="left:577px;top:456px;font-size:12px;color:#000;">円</div>
<div class="b" style="left:600px;top:439px;width:148px;height:35px;border:1px solid #dcdcdc;"></div>
<div class="t" style="left:608px;top:432px;font-size:12px;color:#000;background:#f0f0f0;padding:0 2px 0 2px;margin-left:-2px;">障害者</div>
<div class="b" style="left:604px;top:452px;width:11px;height:11px;border-radius:50%;border:1px solid #737373;background:#f7f7f7;"></div>
<div class="t" style="left:622px;top:452px;font-size:12px;color:#000;">一般</div>
<div class="b" style="left:657px;top:452px;width:11px;height:11px;border-radius:50%;border:1px solid #737373;background:#f7f7f7;"></div>
<div class="t" style="left:674px;top:452px;font-size:12px;color:#000;">特別</div>
<div class="b" style="left:707px;top:452px;width:13px;height:13px;border-radius:50%;background:#0f62b9;"></div>
<div class="b" style="left:711px;top:456px;width:5px;height:5px;border-radius:50%;background:#fff;"></div>
<div class="t" style="left:724px;top:452px;font-size:12px;color:#000;letter-spacing:-1.5px">なし</div>
<div class="b" style="left:754px;top:440px;width:13px;height:13px;border-radius:3px;background:#0f62b9;"></div>
<svg class="b" style="left:754px;top:440px" width="13" height="13"><path d="M3.2 6.8 L5.4 9 L10 4.4" stroke="#fff" stroke-width="1" fill="none"/></svg>
<div class="t" style="left:771px;top:439px;font-size:12px;color:#000;">同居</div>
<div class="b" style="left:754px;top:463px;width:11px;height:11px;border-radius:3px;border:1px solid #6e6e6e;background:#f7f7f7;"></div>
<div class="t" style="left:771px;top:462px;font-size:12px;color:#000;">非居住者</div>
<div class="b" style="left:834px;top:445px;width:17px;height:1px;background:#2a2a2a"></div>
<div class="b" style="left:834px;top:445px;width:1px;height:25px;background:#4a4a4a"></div>
<div class="b" style="left:820px;top:470px;width:31px;height:1px;background:#3a3a3a"></div>
<div class="b" style="left:856px;top:440px;width:11px;height:11px;border-radius:3px;border:1px solid #d6d6d6;background:#f6f6f6;"></div>
<div class="t" style="left:875px;top:439px;font-size:12px;color:#a0a0a0;">留学</div>
<div class="b" style="left:856px;top:463px;width:11px;height:11px;border-radius:3px;border:1px solid #d6d6d6;background:#f6f6f6;"></div>
<div class="t m" style="left:875px;top:463px;color:#a0a0a0;"><i>3</i><i>8</i></div>
<div class="t" style="left:887px;top:462px;font-size:12px;color:#a0a0a0;">万以上送金</div>
<div class="b" style="left:213px;top:484px;width:743px;height:45px;border:1px solid #dcdcdc;"></div>
<div class="t" style="left:220px;top:477px;font-size:12px;color:#000;background:#f0f0f0;padding:0 2px 0 2px;margin-left:-2px;">親族</div>
<div class="t m" style="left:244px;top:477px;color:#000;background:#f0f0f0;padding-right:2px"><i>5</i></div>
<div class="t" style="left:219px;top:492px;font-size:12px;color:#000;">名&nbsp;前</div>
<div class="t h" style="left:219px;top:514px;font-size:12px;color:#000;transform:scaleX(0.6250);">フリガナ</div>
<div class="b" style="left:257px;top:491px;width:78px;height:17px;background:#fff;border-bottom:1px solid #868686;border-radius:2px 2px 0 0;"></div>
<div class="t" style="left:259px;top:493px;font-size:12px;color:#000;">給与喜代子</div>
<div class="b" style="left:257px;top:513px;width:78px;height:17px;background:#fff;border-bottom:1px solid #868686;border-radius:2px 2px 0 0;"></div>
<div class="t h" style="left:259px;top:513px;font-size:14px;color:#000;transform:scaleX(0.5143);">キュウヨキヨコ</div>
<div class="t" style="left:365px;top:492px;font-size:12px;color:#000;">続柄</div>
<div class="b" style="left:394px;top:491px;width:48px;height:17px;background:#fff;border-bottom:1px solid #868686;border-radius:2px 2px 0 0;"></div>
<div class="t" style="left:396px;top:493px;font-size:12px;color:#000;">母</div>
<div class="t" style="left:339px;top:515px;font-size:12px;color:#000;">生年月日</div>
<div class="b" style="left:394px;top:513px;width:78px;height:17px;background:#fff;border-bottom:1px solid #868686;border-radius:2px 2px 0 0;"></div>
<div class="t m" style="left:397px;top:515px;color:#000;"><i>1</i><i>9</i><i>3</i><i>9</i><i>/</i><i>0</i><i>1</i><i>/</i><i>0</i><i>4</i></div>
<div class="t" style="left:468px;top:492px;font-size:12px;color:#000;">年間</div>
<div class="b" style="left:496px;top:490px;width:76px;height:20px;background:#fff;"></div>
<div class="b" style="left:556px;top:490px;width:16px;height:20px;background:#f0f0f0;border:1px solid #fbfbfb;box-sizing:border-box"></div>
<svg class="b" style="left:561px;top:499px" width="7" height="4"><path d="M0.5 0 L6.5 0 L3.5 3.2 Z" fill="#000"/></svg>
<div class="b" style="left:496px;top:511px;width:73px;height:15px;background:#f0f0f0;border:1px solid #fafafa;"></div>
<div class="t" style="left:578px;top:512px;font-size:12px;color:#000;">円</div>
<div class="b" style="left:600px;top:494px;width:148px;height:35px;border:1px solid #dcdcdc;"></div>
<div class="t" style="left:608px;top:487px;font-size:12px;color:#000;background:#f0f0f0;padding:0 2px 0 2px;margin-left:-2px;">障害者</div>
<div class="b" style="left:604px;top:507px;width:11px;height:11px;border-radius:50%;border:1px solid #737373;background:#f7f7f7;"></div>
<div class="t" style="left:622px;top:507px;font-size:12px;color:#000;">一般</div>
<div class="b" style="left:657px;top:507px;width:11px;height:11px;border-radius:50%;border:1px solid #737373;background:#f7f7f7;"></div>
<div class="t" style="left:674px;top:507px;font-size:12px;color:#000;">特別</div>
<div class="b" style="left:707px;top:507px;width:13px;height:13px;border-radius:50%;background:#0f62b9;"></div>
<div class="b" style="left:711px;top:511px;width:5px;height:5px;border-radius:50%;background:#fff;"></div>
<div class="t" style="left:724px;top:507px;font-size:12px;color:#000;letter-spacing:-1.5px">なし</div>
<div class="b" style="left:754px;top:495px;width:13px;height:13px;border-radius:3px;background:#0f62b9;"></div>
<svg class="b" style="left:754px;top:495px" width="13" height="13"><path d="M3.2 6.8 L5.4 9 L10 4.4" stroke="#fff" stroke-width="1" fill="none"/></svg>
<div class="t" style="left:771px;top:494px;font-size:12px;color:#000;">同居</div>
<div class="b" style="left:754px;top:518px;width:11px;height:11px;border-radius:3px;border:1px solid #6e6e6e;background:#f7f7f7;"></div>
<div class="t" style="left:771px;top:517px;font-size:12px;color:#000;">非居住者</div>
<div class="b" style="left:834px;top:500px;width:17px;height:1px;background:#2a2a2a"></div>
<div class="b" style="left:834px;top:500px;width:1px;height:25px;background:#4a4a4a"></div>
<div class="b" style="left:820px;top:525px;width:31px;height:1px;background:#3a3a3a"></div>
<div class="b" style="left:856px;top:495px;width:11px;height:11px;border-radius:3px;border:1px solid #d6d6d6;background:#f6f6f6;"></div>
<div class="t" style="left:875px;top:494px;font-size:12px;color:#a0a0a0;">留学</div>
<div class="b" style="left:856px;top:518px;width:11px;height:11px;border-radius:3px;border:1px solid #d6d6d6;background:#f6f6f6;"></div>
<div class="t m" style="left:875px;top:518px;color:#a0a0a0;"><i>3</i><i>8</i></div>
<div class="t" style="left:887px;top:517px;font-size:12px;color:#a0a0a0;">万以上送金</div>
<div class="b" style="left:213px;top:541px;width:743px;height:45px;border:1px solid #dcdcdc;"></div>
<div class="t" style="left:220px;top:534px;font-size:12px;color:#000;background:#f0f0f0;padding:0 2px 0 2px;margin-left:-2px;">親族</div>
<div class="t m" style="left:244px;top:534px;color:#000;background:#f0f0f0;padding-right:2px"><i>6</i></div>
<div class="t" style="left:219px;top:549px;font-size:12px;color:#000;">名&nbsp;前</div>
<div class="t h" style="left:219px;top:571px;font-size:12px;color:#000;transform:scaleX(0.6250);">フリガナ</div>
<div class="b" style="left:257px;top:548px;width:78px;height:17px;background:#fff;border-bottom:1px solid #868686;border-radius:2px 2px 0 0;"></div>
<div class="t" style="left:259px;top:550px;font-size:12px;color:#000;">給与キワ</div>
<div class="b" style="left:257px;top:570px;width:78px;height:17px;background:#fff;border-bottom:1px solid #868686;border-radius:2px 2px 0 0;"></div>
<div class="t h" style="left:259px;top:570px;font-size:14px;color:#000;transform:scaleX(0.5143);">キュウヨキワ</div>
<div class="t" style="left:365px;top:549px;font-size:12px;color:#000;">続柄</div>
<div class="b" style="left:394px;top:548px;width:48px;height:17px;background:#fff;border-bottom:1px solid #868686;border-radius:2px 2px 0 0;"></div>
<div class="t" style="left:396px;top:550px;font-size:12px;color:#000;">祖母</div>
<div class="t" style="left:340px;top:572px;font-size:12px;color:#000;">生年月日</div>
<div class="b" style="left:394px;top:570px;width:78px;height:17px;background:#fff;border-bottom:1px solid #868686;border-radius:2px 2px 0 0;"></div>
<div class="t m" style="left:397px;top:572px;color:#000;"><i>1</i><i>9</i><i>3</i><i>8</i><i>/</i><i>1</i><i>1</i><i>/</i><i>1</i><i>3</i></div>
<div class="t" style="left:468px;top:549px;font-size:12px;color:#000;">年間</div>
<div class="b" style="left:496px;top:547px;width:76px;height:20px;background:#fff;"></div>
<div class="b" style="left:556px;top:547px;width:16px;height:20px;background:#f0f0f0;border:1px solid #fbfbfb;box-sizing:border-box"></div>
<svg class="b" style="left:561px;top:556px" width="7" height="4"><path d="M0.5 0 L6.5 0 L3.5 3.2 Z" fill="#000"/></svg>
<div class="b" style="left:496px;top:568px;width:73px;height:15px;background:#f0f0f0;border:1px solid #fafafa;"></div>
<div class="t" style="left:578px;top:568px;font-size:12px;color:#000;">円</div>
<div class="b" style="left:600px;top:551px;width:148px;height:35px;border:1px solid #dcdcdc;"></div>
<div class="t" style="left:608px;top:544px;font-size:12px;color:#000;background:#f0f0f0;padding:0 2px 0 2px;margin-left:-2px;">障害者</div>
<div class="b" style="left:604px;top:564px;width:13px;height:13px;border-radius:50%;background:#0f62b9;"></div>
<div class="b" style="left:608px;top:568px;width:5px;height:5px;border-radius:50%;background:#fff;"></div>
<div class="t" style="left:622px;top:564px;font-size:12px;color:#000;">一般</div>
<div class="b" style="left:657px;top:564px;width:11px;height:11px;border-radius:50%;border:1px solid #737373;background:#f7f7f7;"></div>
<div class="t" style="left:674px;top:564px;font-size:12px;color:#000;">特別</div>
<div class="b" style="left:707px;top:564px;width:11px;height:11px;border-radius:50%;border:1px solid #737373;background:#f7f7f7;"></div>
<div class="t" style="left:724px;top:564px;font-size:12px;color:#000;letter-spacing:-1.5px">なし</div>
<div class="b" style="left:754px;top:552px;width:13px;height:13px;border-radius:3px;background:#0f62b9;"></div>
<svg class="b" style="left:754px;top:552px" width="13" height="13"><path d="M3.2 6.8 L5.4 9 L10 4.4" stroke="#fff" stroke-width="1" fill="none"/></svg>
<div class="t" style="left:771px;top:551px;font-size:12px;color:#000;">同居</div>
<div class="b" style="left:754px;top:575px;width:11px;height:11px;border-radius:3px;border:1px solid #6e6e6e;background:#f7f7f7;"></div>
<div class="t" style="left:771px;top:574px;font-size:12px;color:#000;">非居住者</div>
<div class="b" style="left:834px;top:557px;width:17px;height:1px;background:#2a2a2a"></div>
<div class="b" style="left:834px;top:557px;width:1px;height:25px;background:#4a4a4a"></div>
<div class="b" style="left:820px;top:582px;width:31px;height:1px;background:#3a3a3a"></div>
<div class="b" style="left:856px;top:552px;width:11px;height:11px;border-radius:3px;border:1px solid #d6d6d6;background:#f6f6f6;"></div>
<div class="t" style="left:875px;top:551px;font-size:12px;color:#a0a0a0;">留学</div>
<div class="b" style="left:856px;top:575px;width:11px;height:11px;border-radius:3px;border:1px solid #d6d6d6;background:#f6f6f6;"></div>
<div class="t m" style="left:875px;top:575px;color:#a0a0a0;"><i>3</i><i>8</i></div>
<div class="t" style="left:887px;top:574px;font-size:12px;color:#a0a0a0;">万以上送金</div>
<div class="b" style="left:213px;top:597px;width:743px;height:46px;border:1px solid #dcdcdc;"></div>
<div class="t" style="left:220px;top:590px;font-size:12px;color:#000;background:#f0f0f0;padding:0 2px 0 2px;margin-left:-2px;">親族</div>
<div class="t m" style="left:244px;top:590px;color:#000;background:#f0f0f0;padding-right:2px"><i>7</i></div>
<div class="t" style="left:219px;top:605px;font-size:12px;color:#000;">名&nbsp;前</div>
<div class="t h" style="left:219px;top:627px;font-size:12px;color:#000;transform:scaleX(0.6250);">フリガナ</div>
<div class="b" style="left:257px;top:604px;width:78px;height:17px;background:#fff;border-bottom:1px solid #868686;border-radius:2px 2px 0 0;"></div>
<div class="b" style="left:257px;top:626px;width:78px;height:17px;background:#fff;border-bottom:1px solid #868686;border-radius:2px 2px 0 0;"></div>
<div class="t" style="left:365px;top:605px;font-size:12px;color:#000;">続柄</div>
<div class="b" style="left:394px;top:604px;width:48px;height:17px;background:#fff;border-bottom:1px solid #868686;border-radius:2px 2px 0 0;"></div>
<div class="t" style="left:343px;top:628px;font-size:12px;color:#000;">生年月日</div>
<div class="b" style="left:394px;top:626px;width:78px;height:17px;background:#fff;border-bottom:1px solid #868686;border-radius:2px 2px 0 0;"></div>
<div class="t" style="left:468px;top:605px;font-size:12px;color:#000;">年間</div>
<div class="b" style="left:496px;top:603px;width:76px;height:20px;background:#fff;"></div>
<div class="b" style="left:556px;top:603px;width:16px;height:20px;background:#f0f0f0;border:1px solid #fbfbfb;box-sizing:border-box"></div>
<svg class="b" style="left:561px;top:612px" width="7" height="4"><path d="M0.5 0 L6.5 0 L3.5 3.2 Z" fill="#000"/></svg>
<div class="b" style="left:496px;top:624px;width:73px;height:15px;background:#f0f0f0;border:1px solid #fafafa;"></div>
<div class="t" style="left:578px;top:624px;font-size:12px;color:#000;">円</div>
<div class="b" style="left:600px;top:607px;width:148px;height:36px;border:1px solid #dcdcdc;"></div>
<div class="t" style="left:608px;top:600px;font-size:12px;color:#000;background:#f0f0f0;padding:0 2px 0 2px;margin-left:-2px;">障害者</div>
<div class="b" style="left:604px;top:620px;width:11px;height:11px;border-radius:50%;border:1px solid #737373;background:#f7f7f7;"></div>
<div class="t" style="left:622px;top:620px;font-size:12px;color:#000;">一般</div>
<div class="b" style="left:657px;top:620px;width:11px;height:11px;border-radius:50%;border:1px solid #737373;background:#f7f7f7;"></div>
<div class="t" style="left:674px;top:620px;font-size:12px;color:#000;">特別</div>
<div class="b" style="left:707px;top:620px;width:13px;height:13px;border-radius:50%;background:#0f62b9;"></div>
<div class="b" style="left:711px;top:624px;width:5px;height:5px;border-radius:50%;background:#fff;"></div>
<div class="t" style="left:724px;top:620px;font-size:12px;color:#000;letter-spacing:-1.5px">なし</div>
<div class="b" style="left:754px;top:608px;width:13px;height:13px;border-radius:3px;background:#0f62b9;"></div>
<svg class="b" style="left:754px;top:608px" width="13" height="13"><path d="M3.2 6.8 L5.4 9 L10 4.4" stroke="#fff" stroke-width="1" fill="none"/></svg>
<div class="t" style="left:771px;top:607px;font-size:12px;color:#000;">同居</div>
<div class="b" style="left:754px;top:631px;width:11px;height:11px;border-radius:3px;border:1px solid #6e6e6e;background:#f7f7f7;"></div>
<div class="t" style="left:771px;top:630px;font-size:12px;color:#000;">非居住者</div>
<div class="b" style="left:834px;top:613px;width:17px;height:1px;background:#2a2a2a"></div>
<div class="b" style="left:834px;top:613px;width:1px;height:25px;background:#4a4a4a"></div>
<div class="b" style="left:820px;top:638px;width:31px;height:1px;background:#3a3a3a"></div>
<div class="b" style="left:856px;top:608px;width:11px;height:11px;border-radius:3px;border:1px solid #d6d6d6;background:#f6f6f6;"></div>
<div class="t" style="left:875px;top:607px;font-size:12px;color:#a0a0a0;">留学</div>
<div class="b" style="left:856px;top:631px;width:11px;height:11px;border-radius:3px;border:1px solid #d6d6d6;background:#f6f6f6;"></div>
<div class="t m" style="left:875px;top:631px;color:#a0a0a0;"><i>3</i><i>8</i></div>
<div class="t" style="left:887px;top:630px;font-size:12px;color:#a0a0a0;">万以上送金</div>
<svg class="b" style="left:22px;top:677px" width="11" height="10"><path d="M0.5 0.5 L10 0.5 L5.25 9.3 Z" fill="#000"/></svg>
<div class="t" style="left:33px;top:675px;font-size:12px;color:#000;letter-spacing:0.15px">給与支払報告書及び源泉徴収票(摘要)欄追記文</div>
<div class="t" style="left:291px;top:675px;font-size:12px;color:#000;letter-spacing:0.45px">※最大入力文字数:全角</div>
<div class="t m" style="left:417px;top:675px;color:#000;"><i>5</i><i>0</i></div>
<div class="t" style="left:430px;top:675px;font-size:12px;color:#000;letter-spacing:-2.3px">文字まで</div>
<div class="b" style="left:33px;top:692px;width:625px;height:17px;background:#fff;border-bottom:1px solid #8a8a8a;"></div>
<div class="b" style="left:730px;top:669px;width:116px;height:38px;background:#fdfdfd;border:1px solid #d3d3d3;border-radius:4px;"></div>
<svg class="b" style="left:756px;top:676px" width="26" height="26"><circle cx="13" cy="13" r="12.8" fill="#1b6e1b"/>
<path d="M11.8 7.2 A6 6 0 0 1 18.4 15.3" stroke="#e9f7e9" stroke-width="2.3" fill="none"/><path d="M9.3 7.6 L13.8 4.6 L13.6 10.4 Z" fill="#e9f7e9"/>
<path d="M7.3 10.8 A6 6 0 0 0 13.2 18.8" stroke="#e9f7e9" stroke-width="2.3" fill="none"/><path d="M16.6 18.5 L12.3 15.6 L12.5 21.4 Z" fill="#e9f7e9"/></svg>
<div class="t" style="left:786px;top:681px;font-size:12px;color:#000;">更新</div>
<div class="b" style="left:861px;top:669px;width:116px;height:38px;background:#fdfdfd;border:1px solid #d3d3d3;border-radius:4px;"></div>
<svg class="b" style="left:882px;top:676px" width="26" height="26"><circle cx="13" cy="13" r="12.8" fill="#e05454"/>
<path d="M8.8 8.8 L17.2 17.2 M17.2 8.8 L8.8 17.2" stroke="#fdeaea" stroke-width="2"/></svg>
<div class="t" style="left:912px;top:681px;font-size:12px;color:#000;letter-spacing:-1.5px">閉じる</div>
</body></html>
